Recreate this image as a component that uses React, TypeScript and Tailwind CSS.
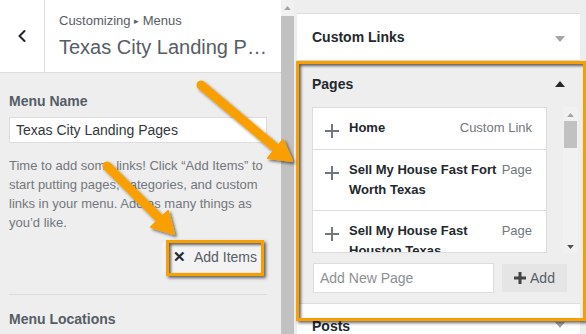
import { ChevronLeft } from 'lucide-react'

const font = { fontFamily: '"Liberation Sans", Arial, sans-serif' }

function Tri({ up, className }: { up?: boolean; className: string }) {
  return (
    <svg width="10" height="6" viewBox="0 0 10 6" className={className}>
      {up ? <path d="M0 6 L5 0 L10 6 Z" fill="currentColor" /> : <path d="M0 0 L5 6 L10 0 Z" fill="currentColor" />}
    </svg>
  )
}

function PlusIcon({ className }: { className?: string }) {
  return (
    <svg width="16" height="16" viewBox="0 0 16 16" className={className}>
      <path d="M8 1 V15 M1 8 H15" stroke="currentColor" strokeWidth="2" />
    </svg>
  )
}

function PageRow({ title, kind, last }: { title: React.ReactNode; kind: string; last?: boolean }) {
  return (
    <div className={`flex items-start pl-[11px] pr-[14px] pt-[10px] pb-[10px] ${last ? '' : 'border-b border-[#dddddd]'}`}>
      <PlusIcon className="text-[#72777c] mt-[5px] shrink-0" />
      <div className="ml-[9px] flex-1 whitespace-nowrap text-[13px] leading-[20px] font-bold text-[#23282d]">{title}</div>
      <div className="text-[13px] leading-[20px] whitespace-nowrap text-[#72777c] ml-[4px]">{kind}</div>
    </div>
  )
}

export default function App() {
  return (
    <div className="relative w-[586px] h-[334px] overflow-hidden flex bg-[#eeeeee]" style={font}>
      {/* Left: menu settings */}
      <div className="w-[281px] h-full flex flex-col bg-[#eeeeee]">
        <div className="h-[73px] flex bg-white border-b border-[#dddddd] shrink-0">
          <div className="w-[45px] border-r border-[#dddddd] flex items-center justify-center">
            <ChevronLeft size={20} strokeWidth={2.5} className="text-[#23282d]" />
          </div>
          <div className="pl-[14px] pt-[12px]">
            <div className="text-[13px] leading-[18px] text-[#555d66]">Customizing <span className="text-[9px] align-[1px]">▸</span> Menus</div>
            <div className="text-[20px] leading-[26px] mt-[4px] text-[#555d66]">Texas City Landing P…</div>
          </div>
        </div>
        <div className="px-[9px] pt-[19px] pr-[14px]">
          <div className="text-[14px] leading-[18px] font-bold text-[#555d66]">Menu Name</div>
          <div className="mt-[7px] h-[26px] bg-white border border-[#dddddd] px-[6px] text-[14px] leading-[24px] text-[#32373c]">
            Texas City Landing Pages
          </div>
          <p className="mt-[13px] text-[13px] leading-[19px] text-[#72777c] w-[262px]">
            Time to add some links! Click “Add Items” to start putting pages, categories, and custom links in your menu. Add as many things as you’d like.
          </p>
          <div className="flex justify-end mt-[10px] pr-[3px]">
            <div className="h-[30px] w-[102px] bg-[#f3f3f3] flex items-center pl-[11px] text-[14px] text-[#555d66]">
              <span className="font-bold text-[#23282d] text-[15px] mr-[8px]">✕</span>Add Items
            </div>
          </div>
          <div className="mt-[22px] border-t border-[#dddddd]" />
          <div className="mt-[15px] text-[14px] leading-[18px] font-bold text-[#555d66]">Menu Locations</div>
        </div>
      </div>

      {/* Left scrollbar */}
      <div className="w-[13px] h-full flex flex-col">
        <div className="h-[16px] bg-[#f1f1f1] flex items-center justify-center">
          <Tri up className="text-[#a3a3a3] w-[7px] h-[4px]" />
        </div>
        <div className="flex-1 bg-[#c1c1c1]" />
      </div>
      <div className="w-[3px] h-full bg-[#eeeeee]" />

      {/* Right: add items */}
      <div className="w-[283px] h-full flex flex-col">
        <div className="h-[14px] bg-[#eeeeee] border-b border-[#dddddd] shrink-0" />
        <div className="h-[47px] bg-white border-b border-[#dddddd] flex items-center justify-between pl-[15px] pr-[15px] shrink-0">
          <span className="text-[14px] font-bold text-[#23282d]">Custom Links</span>
          <Tri className="text-[#a0a5aa] mt-[4px]" />
        </div>
        <div className="h-[242px] bg-[#eeeeee] shrink-0 relative">
          <div className="h-[46px] flex items-center justify-between pl-[15px] pr-[15px]">
            <span className="text-[14px] font-bold text-[#23282d]">Pages</span>
            <Tri up className="text-[#23282d]" />
          </div>
          <div className="flex pl-[15px]">
            <div className="w-[235px] h-[146px] overflow-hidden bg-white border border-[#dddddd]">
              <PageRow title="Home" kind="Custom Link" />
              <PageRow title={<>Sell My House Fast Fort<br />Worth Texas</>} kind="Page" />
              <PageRow title={<>Sell My House Fast<br />Houston Texas</>} kind="Page" last />
            </div>
            <div className="ml-[16px] w-[15px] h-[146px] bg-[#f1f1f1] flex flex-col items-center">
              <Tri up className="text-[#a3a3a3] w-[7px] h-[4px] mt-[6px]" />
              <div className="mt-[4px] w-[13px] h-[27px] bg-[#c1c1c1]" />
              <div className="flex-1" />
              <Tri className="text-[#505050] w-[7px] h-[4px] mb-[4px]" />
            </div>
          </div>
          <div className="flex items-center pl-[16px] mt-[10px]">
            <div className="w-[181px] h-[30px] bg-white border border-[#dddddd] px-[6px] text-[14px] leading-[28px] text-[#8c8f94]">
              Add New Page
            </div>
            <div className="ml-[8px] w-[65px] h-[28px] bg-[#e5e5e5] flex items-center justify-center text-[14px] text-[#555d66]">
              <svg width="12" height="12" viewBox="0 0 12 12" className="mr-[4px]">
                <path d="M6 0 V12 M0 6 H12" stroke="#444" strokeWidth="3" />
              </svg>
              Add
            </div>
          </div>
        </div>
        <div className="flex-1 bg-white border-t border-[#dddddd] flex items-start justify-between pl-[15px] pr-[15px] pt-[12px]">
          <span className="text-[14px] font-bold text-[#23282d]">Posts</span>
          <Tri className="text-[#a0a5aa] mt-[6px]" />
        </div>
      </div>
      <div className="flex-1 h-full bg-[#eeeeee]" />

      {/* Annotations */}
      <div className="absolute left-[296px] top-[61px] w-[290px] h-[260px] border-[3px] border-[#f9a000] shadow-[2px_2px_3px_rgba(0,0,0,0.6),inset_2px_2px_3px_rgba(0,0,0,0.6)] pointer-events-none" />
      <div className="absolute left-[166px] top-[240px] w-[98px] h-[36px] border-[3px] border-[#f9a000] shadow-[2px_2px_3px_rgba(0,0,0,0.6),inset_2px_2px_3px_rgba(0,0,0,0.6)] pointer-events-none" />
      <svg className="absolute left-0 top-0 pointer-events-none" width="586" height="334" viewBox="0 0 586 334">
        <defs>
          <filter id="sh" x="-20%" y="-20%" width="140%" height="140%">
            <feDropShadow dx="2" dy="2" stdDeviation="1.5" floodColor="#000" floodOpacity="0.55" />
          </filter>
        </defs>
        <g filter="url(#sh)" fill="#f9a000" stroke="#f9a000">
          <line x1="201" y1="85" x2="277" y2="149" strokeWidth="9" strokeLinecap="round" />
          <path d="M292 161 L268 158 L283 140 Z" strokeWidth="2" strokeLinejoin="round" />
          <line x1="107" y1="166" x2="163" y2="222" strokeWidth="9" strokeLinecap="round" />
          <path d="M174 234 L151 227 L168 211 Z" strokeWidth="2" strokeLinejoin="round" />
        </g>
      </svg>
    </div>
  )
}
